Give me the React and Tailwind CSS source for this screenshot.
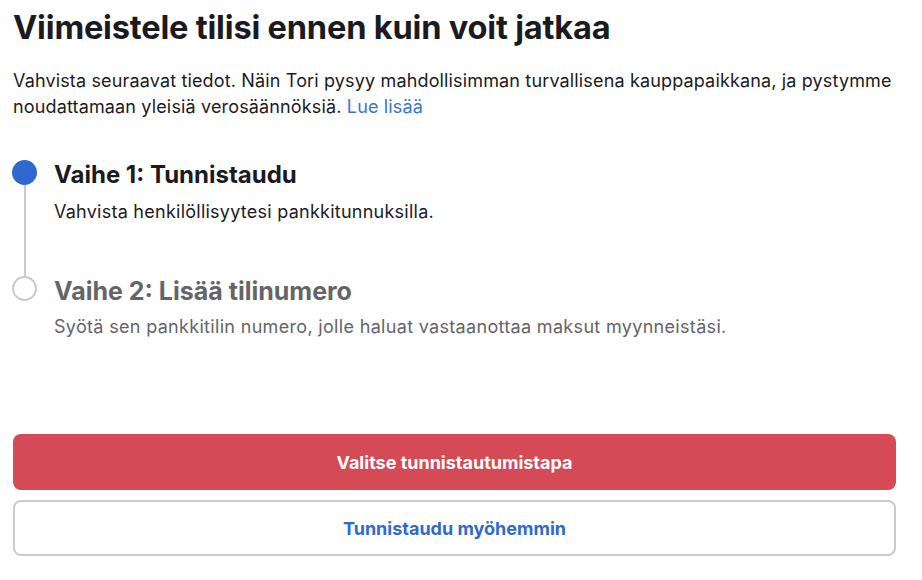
export default function App() {
  return (
    <div className="w-[922px] h-[580px] bg-white pl-[13px] pr-[26px] pt-[6px] flex flex-col" style={{ fontFamily: 'Inter, "Noto Sans", sans-serif' }}>
      <h1 className="text-[32.6px] leading-[42px] font-bold text-[#1b1b1f] tracking-[-0.2px]">
        Viimeistele tilisi ennen kuin voit jatkaa
      </h1>
      <p className="mt-[20px] text-[18px] leading-[26px] tracking-[0.15px] text-[#1b1b1f]">
        Vahvista seuraavat tiedot. Näin Tori pysyy mahdollisimman turvallisena kauppapaikkana, ja pystymme noudattamaan yleisiä verosäännöksiä. <span className="text-[#3a74d0]">Lue lisää</span>
      </p>
      <div className="mt-[40px] flex flex-col">
        <div className="flex">
          <div className="w-[25px] mr-[17px] -ml-[1px] flex flex-col items-center shrink-0">
            <div className="w-[25px] h-[25px] rounded-full bg-[#3069cd]" />
            <div className="w-[2px] flex-1 bg-[#c9c9ce]" />
          </div>
          <div className="pb-[52px]">
            <div className="text-[24px] leading-[30px] font-bold text-[#1b1b1f]">Vaihe 1: Tunnistaudu</div>
            <div className="mt-[10px] text-[18px] leading-[24px] tracking-[0.25px] text-[#1b1b1f]">Vahvista henkilöllisyytesi pankkitunnuksilla.</div>
          </div>
        </div>
        <div className="flex">
          <div className="w-[25px] mr-[17px] -ml-[1px] flex flex-col items-center shrink-0">
            <div className="w-[25px] h-[25px] rounded-full border-2 border-[#c9c9ce] bg-white" />
          </div>
          <div>
            <div className="text-[25px] leading-[30px] font-bold text-[#646469]">Vaihe 2: Lisää tilinumero</div>
            <div className="mt-[9px] text-[18px] leading-[24px] tracking-[0.32px] text-[#646469]">Syötä sen pankkitilin numero, jolle haluat vastaanottaa maksut myynneistäsi.</div>
          </div>
        </div>
      </div>
      <div className="mt-[95px] flex flex-col gap-[10px]">
        <button className="h-[56px] w-full rounded-[8px] bg-[#d44a55] text-white text-[18px] font-bold">
          Valitse tunnistautumistapa
        </button>
        <button className="h-[56px] w-full rounded-[8px] border-2 border-[#cacace] bg-white text-[#3069cd] text-[18px] font-bold">
          Tunnistaudu myöhemmin
        </button>
      </div>
    </div>
  );
}
